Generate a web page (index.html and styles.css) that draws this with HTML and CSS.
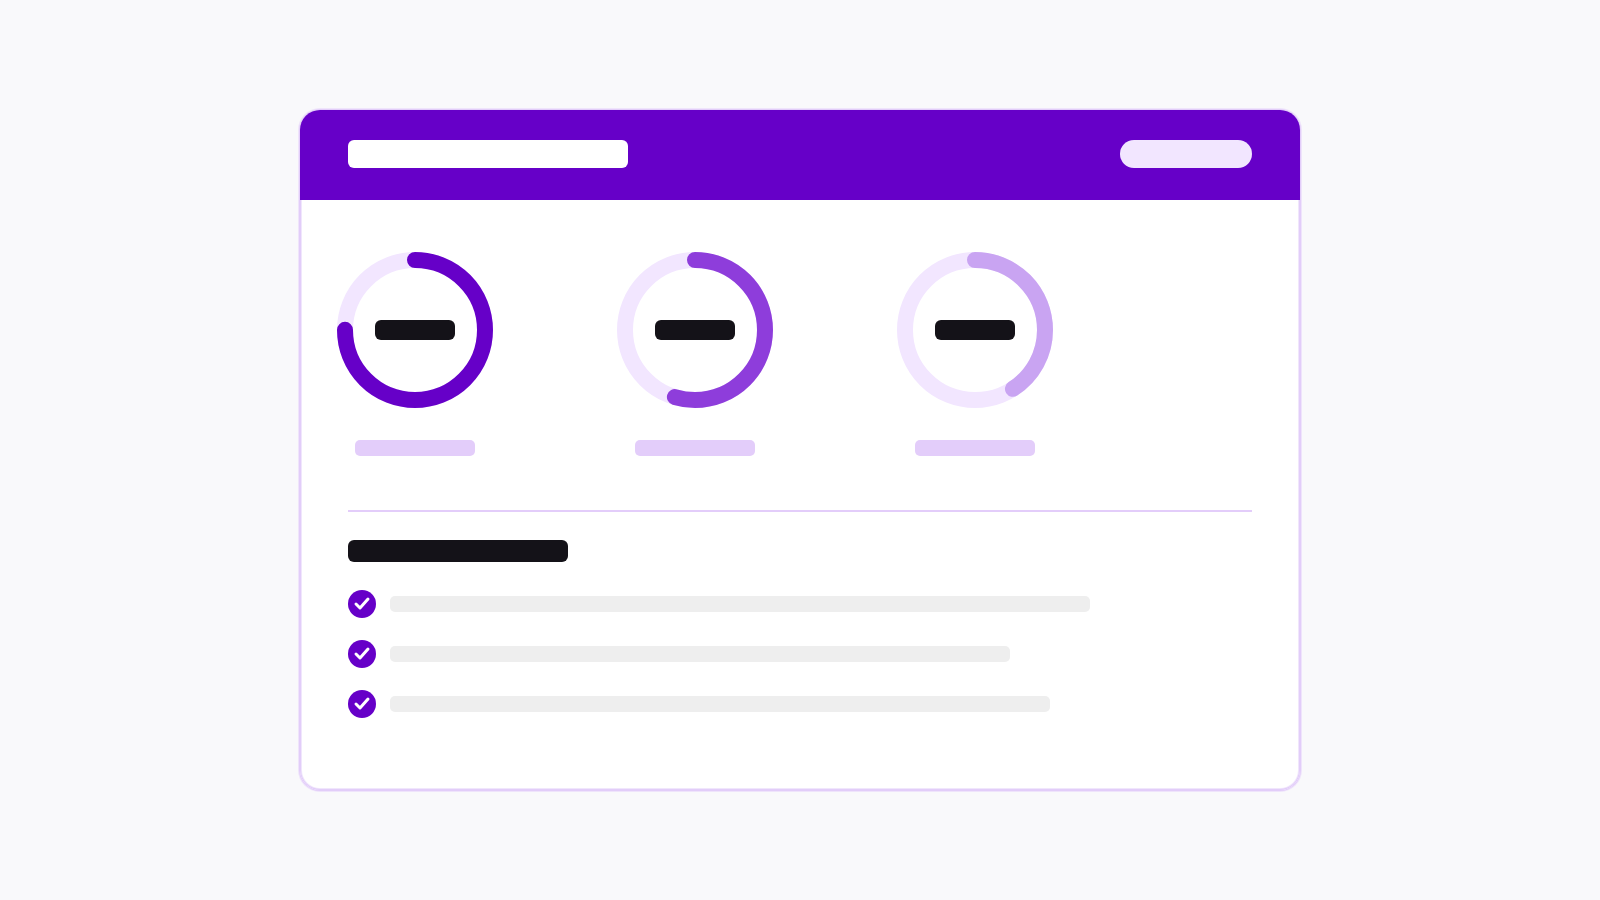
FILE: index.html
```
<!DOCTYPE html>
<html lang="en">
  <head>
    <meta charset="UTF-8" />
    <meta name="viewport" content="width=device-width, initial-scale=1.0" />
    <title>Dashboard</title>
    <link rel="stylesheet" href="styles.css">
  </head>
  <body>
    <main class="card">
      <header class="card-header">
        <div class="title"></div>
        <div class="pill"></div>
      </header>

      <section class="metrics">
        <div class="metric">
          <div class="ring">
            <svg viewBox="0 0 156 156">
              <circle class="track" cx="78" cy="78" r="70" />
              <circle class="progress high" cx="78" cy="78" r="70" stroke-dasharray="329.5 440" />
            </svg>
            <div class="value"></div>
          </div>
          <div class="label"></div>
        </div>
        <div class="metric">
          <div class="ring">
            <svg viewBox="0 0 156 156">
              <circle class="track" cx="78" cy="78" r="70" />
              <circle class="progress medium" cx="78" cy="78" r="70" stroke-dasharray="240 440" />
            </svg>
            <div class="value"></div>
          </div>
          <div class="label"></div>
        </div>
        <div class="metric">
          <div class="ring">
            <svg viewBox="0 0 156 156">
              <circle class="track" cx="78" cy="78" r="70" />
              <circle class="progress low" cx="78" cy="78" r="70" stroke-dasharray="179.5 440" />
            </svg>
            <div class="value"></div>
          </div>
          <div class="label"></div>
        </div>
      </section>

      <section class="tasks">
        <div class="heading"></div>
        <ul class="task-list">
          <li class="task">
            <svg class="check" viewBox="0 0 28 28">
              <circle cx="14" cy="14" r="14" />
              <path d="M8 14 L12 18 L20 9" />
            </svg>
            <div class="line long"></div>
          </li>
          <li class="task">
            <svg class="check" viewBox="0 0 28 28">
              <circle cx="14" cy="14" r="14" />
              <path d="M8 14 L12 18 L20 9" />
            </svg>
            <div class="line short"></div>
          </li>
          <li class="task">
            <svg class="check" viewBox="0 0 28 28">
              <circle cx="14" cy="14" r="14" />
              <path d="M8 14 L12 18 L20 9" />
            </svg>
            <div class="line"></div>
          </li>
        </ul>
      </section>
    </main>
  </body>
</html>
```

FILE: styles.css
```
* {
  box-sizing: border-box;
}

body {
  margin: 0;
  min-height: 100vh;
  padding: 24px;
  display: flex;
  justify-content: center;
  align-items: center;
  background: #f9f9fb;
  font-family: Inter, Arial, sans-serif;
}

/* The outline sits half outside and half inside the card, the header covers the inner half */
.card {
  width: 100%;
  max-width: 1000px;
  background: white;
  border-radius: 20px;
  box-shadow:
    0 0 0 1px #e2cdf9,
    0 0 0 2px #efe4fb,
    inset 0 0 0 1px #e2cdf9,
    inset 0 0 0 2px #f0e6fc;
}

.card-header {
  display: flex;
  justify-content: space-between;
  gap: 24px;
  padding: 30px 48px 32px;
  background: #6600c8;
  border-radius: 20px 20px 0 0;
}

.title {
  width: 280px;
  height: 28px;
  border-radius: 6px;
  background: white;
}

.pill {
  width: 132px;
  height: 28px;
  border-radius: 14px;
  background: #f2e6ff;
}

.metrics {
  display: flex;
  flex-wrap: wrap;
  gap: 32px 124px;
  padding: 52px 37px 54px;
}

.metric {
  display: flex;
  flex-direction: column;
  align-items: center;
  gap: 32px;
}

/* Ring and value share one grid cell so the value stays centered */
.ring {
  display: grid;
  place-items: center;
}

.ring > * {
  grid-area: 1 / 1;
}

.ring svg {
  display: block;
  width: 156px;
  height: 156px;
  transform: rotate(-90deg);
}

.ring circle {
  fill: none;
  stroke-width: 16;
}

.track {
  stroke: #f2e6ff;
}

.progress {
  stroke-linecap: round;
}

.high {
  stroke: #6600c8;
}

.medium {
  stroke: #8e3ddb;
}

.low {
  stroke: #c9a4f2;
}

.value {
  width: 80px;
  height: 20px;
  border-radius: 6px;
  background: #141218;
  z-index: 1;
}

.label {
  width: 120px;
  height: 16px;
  border-radius: 5px;
  background: #e3cdfa;
}

.tasks {
  margin: 0 48px;
  padding: 28px 0 72px;
  border-top: 2px solid #e3cdfa;
}

.heading {
  width: 220px;
  height: 22px;
  border-radius: 6px;
  background: #141218;
}

.task-list {
  display: flex;
  flex-direction: column;
  gap: 22px;
  margin: 28px 0 0;
  padding: 0;
  list-style: none;
}

.task {
  display: flex;
  align-items: center;
  gap: 14px;
}

.check {
  flex: none;
  width: 28px;
  height: 28px;
}

.check circle {
  fill: #6600c8;
}

.check path {
  fill: none;
  stroke: white;
  stroke-width: 3;
  stroke-linecap: round;
  stroke-linejoin: round;
}

.line {
  width: 660px;
  height: 16px;
  border-radius: 5px;
  background: #eeeeee;
}

.line.long {
  width: 700px;
}

.line.short {
  width: 620px;
}
```
